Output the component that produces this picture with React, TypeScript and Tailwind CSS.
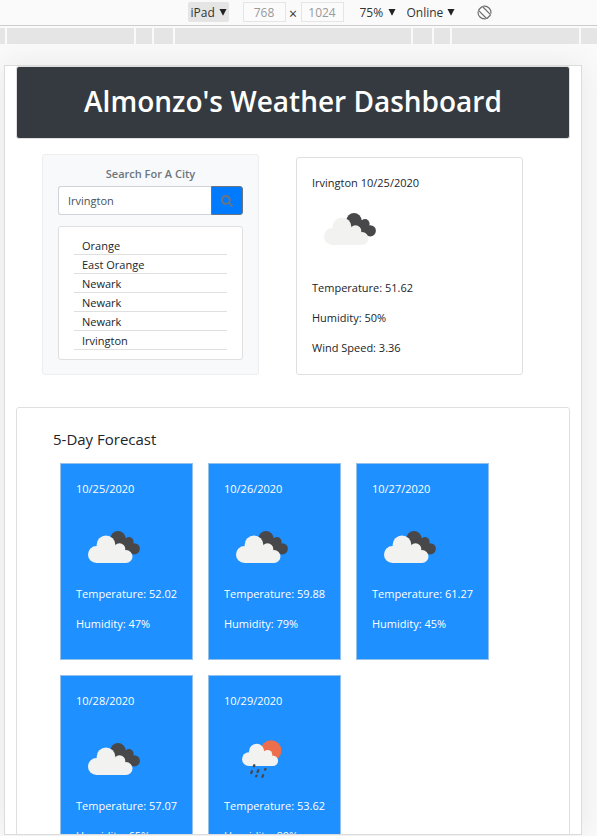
type IconName = 'clouds' | 'rain';

interface Day {
  date: string;
  icon: IconName;
  temperature: string;
  humidity: string;
}

const history = ['Orange', 'East Orange', 'Newark', 'Newark', 'Newark', 'Irvington'];

const forecast: Day[] = [
  { date: '10/25/2020', icon: 'clouds', temperature: '52.02', humidity: '47%' },
  { date: '10/26/2020', icon: 'clouds', temperature: '59.88', humidity: '79%' },
  { date: '10/27/2020', icon: 'clouds', temperature: '61.27', humidity: '45%' },
  { date: '10/28/2020', icon: 'clouds', temperature: '57.07', humidity: '65%' },
  { date: '10/29/2020', icon: 'rain', temperature: '53.62', humidity: '80%' },
];

const rulerLeft = ['w-[5px]', 'w-[127px]', 'w-[16px]', 'w-[19px]'];
const rulerRight = ['w-[19px]', 'w-[16px]', 'w-[127px]', 'w-[16px]'];

function LightCloud() {
  return (
    <g fill="#f2f2f1">
      <circle cx="20.5" cy="44.5" r="8.5" />
      <circle cx="30" cy="35" r="9.4" />
      <circle cx="43.5" cy="39" r="5.8" />
      <circle cx="50" cy="46.5" r="6.5" />
      <path d="M20.5 53V37h23l6.5 5v11z" />
    </g>
  );
}

function WeatherIcon({ name }: { name: IconName }) {
  return (
    <svg className="block size-[75px]" viewBox="0 0 75 75" role="img" aria-label={name}>
      {name === 'clouds' ? (
        <>
          <g fill="#48484a">
            <circle cx="42" cy="28.7" r="7.6" />
            <circle cx="53" cy="31.7" r="4.6" />
            <circle cx="58.3" cy="38.8" r="5.6" />
            <path d="M38 33l10.500-5.500 8 4 2 5-1.500 7.500-6-1-7-8z" />
          </g>
          <LightCloud />
        </>
      ) : (
        <>
          <circle cx="47" cy="28.700" r="10.400" fill="#ec6e4c" />
          <g transform="translate(8.3 1) scale(.81)">
            <LightCloud />
          </g>
          <g stroke="#48484a" strokeWidth="2.300" strokeLinecap="round">
            <path d="M30.300 43.200l-.4 1M28 49.300l-.8 1.700M34.400 48.300l-.8 1.700M41.500 46.900l-.4.7M32.500 53.700l-.3.600M39.100 53.300l-.7 1.500" />
          </g>
        </>
      )}
    </svg>
  );
}

function Caret() {
  return (
    <svg className="pointer-events-none absolute right-[2px] top-[7px] h-[7px] w-[8px]" viewBox="0 0 8 7" aria-hidden="true">
      <path d="M.5 0h7L4 6.800z" fill="#222" />
    </svg>
  );
}

function ToolSelect({ label, value, className }: { label: string; value: string; className: string }) {
  return (
    <div className={`relative h-5 rounded-[2px] ${className}`}>
      <select aria-label={label} className="block h-5 w-full appearance-none bg-transparent pl-[3px] pt-px leading-5 outline-none">
        <option>{value}</option>
      </select>
      <Caret />
    </div>
  );
}

function Toolbar() {
  return (
    <div className="flex h-[26px] shrink-0 items-start justify-center border-b border-[#ccc] pl-[82px] pt-[2px] text-[#333]">
      <div className="flex items-center">
        <ToolSelect label="Device" value="iPad" className="w-[41px] bg-[#e5e5e5]" />
        <input
          aria-label="Width"
          defaultValue="768"
          className="ml-[14px] h-5 w-[43px] border border-[#e5e5e5] bg-[#fbfbfb] pt-px text-center text-[#999] outline-none"
        />
        <span className="w-[15px] pt-[3px] text-center text-[14px] leading-4">×</span>
        <input
          aria-label="Height"
          defaultValue="1024"
          className="h-5 w-[43px] border border-[#e5e5e5] bg-[#fbfbfb] pt-px text-center text-[#999] outline-none"
        />
        <ToolSelect label="Zoom" value="75%" className="ml-[13px] w-[41px]" />
        <ToolSelect label="Throttling" value="Online" className="ml-[6px] w-[53px]" />
        <button type="button" aria-label="Rotate" className="ml-[20px]">
          <svg className="block size-[15px]" viewBox="0 0 15 15" fill="none" stroke="#6e6e6e" strokeWidth="1.200" aria-hidden="true">
            <rect x="4.700" y="1.500" width="5.600" height="12" rx="1" transform="rotate(-45 7.500 7.500)" />
            <path d="M6.300 1.200A6.400 6.400 0 0 1 13.800 8.700M8.700 13.800A6.400 6.400 0 0 1 1.200 6.300" />
          </svg>
        </button>
      </div>
    </div>
  );
}

function Ruler() {
  return (
    <div className="mt-[2px] flex h-4 shrink-0 gap-[2px]" aria-hidden="true">
      {rulerLeft.map((w, i) => (
        <div key={i} className={`${w} bg-[#e5e5e5]`} />
      ))}
      <div className="flex-1 bg-[#e5e5e5]" />
      {rulerRight.map((w, i) => (
        <div key={i} className={`${w} bg-[#e5e5e5]`} />
      ))}
    </div>
  );
}

function SearchPanel() {
  return (
    <section className="h-[221px] w-[217px] rounded-[3px] border border-[#eceef0] bg-[#f8f9fa] px-[15px] pt-[10px]">
      <form onSubmit={(e) => e.preventDefault()}>
        <label htmlFor="city" className="block pb-[3px] text-center font-semibold leading-[18px] text-[#6c757d]">
          Search For A City
        </label>
        <div className="flex h-[29px]">
          <input
            id="city"
            defaultValue="Irvington"
            className="min-w-0 flex-1 rounded-l-[3px] border border-r-0 border-[#ced4da] bg-white px-[9px] pt-[2px] text-[#495057] outline-none"
          />
          <button
            type="submit"
            aria-label="Search"
            className="flex w-8 items-center justify-center rounded-r-[3px] border border-[#6c757d] bg-[#007bff]"
          >
            <svg className="size-3" viewBox="0 0 512 512" fill="#6c757d" aria-hidden="true">
              <path d="M505 442.700L405.300 343c-4.500-4.500-10.600-7-17-7H372c27.600-35.300 44-79.700 44-128C416 93.100 322.900 0 208 0S0 93.100 0 208s93.100 208 208 208c48.300 0 92.700-16.400 128-44v16.300c0 6.400 2.500 12.500 7 17l99.700 99.700c9.400 9.400 24.600 9.400 33.900 0l28.300-28.300c9.400-9.400 9.400-24.600.1-34zM208 336c-70.700 0-128-57.200-128-128 0-70.700 57.200-128 128-128 70.700 0 128 57.200 128 128 0 70.700-57.200 128-128 128z" />
            </svg>
          </button>
        </div>
      </form>
      <ul className="mt-[11px] rounded-[3px] border border-[#dfdfdf] bg-white px-[15px] py-[9px]">
        {history.map((city, i) => (
          <li key={i} className="border-b border-[#dfdfdf] pl-[8px] pt-[2px] leading-4">
            {city}
          </li>
        ))}
      </ul>
    </section>
  );
}

function CurrentWeather() {
  return (
    <section className="mt-[3px] h-[218px] w-[227px] rounded-[3px] border border-[#dfdfdf] bg-white px-[15px] pt-4 leading-[18px]">
      <h2>Irvington 10/25/2020</h2>
      <WeatherIcon name="clouds" />
      <div className="mt-3 flex flex-col gap-3">
        <p>Temperature: 51.62</p>
        <p>Humidity: 50%</p>
        <p>Wind Speed: 3.36</p>
      </div>
    </section>
  );
}

function ForecastCard({ day }: { day: Day }) {
  return (
    <article className="h-[197px] w-[133px] whitespace-nowrap border border-[#94c0ec] bg-[#1e90ff] px-[15px] pt-4 leading-[18px] text-white">
      <h3 className="mb-3">{day.date}</h3>
      <WeatherIcon name={day.icon} />
      <p>Temperature: {day.temperature}</p>
      <p className="mt-3">Humidity: {day.humidity}</p>
    </article>
  );
}

export default function App() {
  return (
    <div className="flex h-screen flex-col overflow-hidden bg-[#fafafa] font-['Open_Sans','Segoe_UI',sans-serif] text-[12px] text-[#212529]">
      <Toolbar />
      <Ruler />
      <main className="mb-px ml-[4px] mr-[15px] mt-[21px] min-h-0 flex-1 overflow-hidden border border-[#dcdcdc] bg-white px-[11px] text-[11px] shadow-[0_0_30px_rgba(0,0,0,0.08)]">
        <header className="flex h-[73px] items-center justify-center rounded-[3px] border border-[#dfdfdf] bg-[#343a40] pb-[3px]">
          <h1 className="whitespace-nowrap text-[28px] font-semibold leading-9 text-white">Almonzo's Weather Dashboard</h1>
        </header>
        <div className="mt-[15px] flex flex-wrap items-start gap-x-[37px] gap-y-4 pl-[26px]">
          <SearchPanel />
          <CurrentWeather />
        </div>
        <section className="mt-[32px] rounded-[3px] border border-[#dfdfdf] pb-8 pl-[36px] pt-[20px]">
          <h2 className="text-[15px] font-medium leading-[22px]">5-Day Forecast</h2>
          <div className="mt-[13px] flex flex-wrap gap-[15px] pl-[7px] pr-[60px]">
            {forecast.map((day) => (
              <ForecastCard key={day.date} day={day} />
            ))}
          </div>
        </section>
      </main>
    </div>
  );
}
